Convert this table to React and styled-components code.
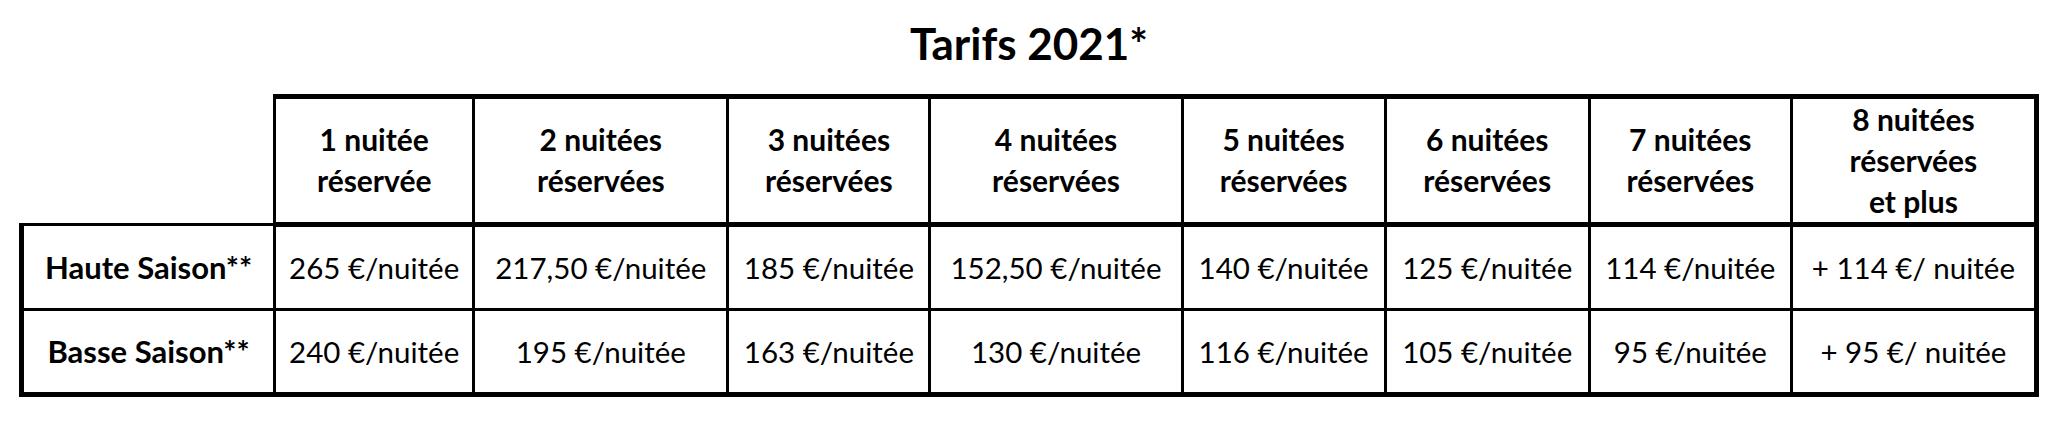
import React from "react";
import styled, { createGlobalStyle } from "styled-components";

const columns = [253, 199, 254, 202, 252, 203, 204, 202, 245];

const headers = [
  ["1 nuitée", "réservée"],
  ["2 nuitées", "réservées"],
  ["3 nuitées", "réservées"],
  ["4 nuitées", "réservées"],
  ["5 nuitées", "réservées"],
  ["6 nuitées", "réservées"],
  ["7 nuitées", "réservées"],
  ["8 nuitées", "réservées", "et plus"],
];

const seasons = [
  {
    label: "Haute Saison**",
    prices: [
      "265 €/nuitée",
      "217,50 €/nuitée",
      "185 €/nuitée",
      "152,50 €/nuitée",
      "140 €/nuitée",
      "125 €/nuitée",
      "114 €/nuitée",
      "+ 114 €/ nuitée",
    ],
  },
  {
    label: "Basse Saison**",
    prices: [
      "240 €/nuitée",
      "195 €/nuitée",
      "163 €/nuitée",
      "130 €/nuitée",
      "116 €/nuitée",
      "105 €/nuitée",
      "95 €/nuitée",
      "+ 95 €/ nuitée",
    ],
  },
];

const GlobalStyle = createGlobalStyle`
  body {
    margin: 0;
    background: #fff;
    color: #000;
    font-family: Lato, "Open Sans", sans-serif;
  }
`;

const Page = styled.main`
  padding: 17px 0 0 19px;
  width: 2020px;
`;

const Title = styled.h1`
  margin: 0 0 24px;
  text-align: center;
  font-size: 44px;
  font-weight: 700;
  line-height: 1.2;
`;

const Table = styled.table`
  border-collapse: collapse;
  table-layout: fixed;
  width: 2020px;
`;

const Col = styled.col`
  width: ${(p) => p.$w}px;
`;

const Corner = styled.th`
  border: none;
  padding: 0;
`;

const HeadCell = styled.th`
  border-top: 5px solid #000;
  border-left: 3px solid #000;
  border-right: 3px solid #000;
  border-bottom: 5px solid #000;
  padding: 0;
  vertical-align: middle;
  font-size: 30px;
  font-weight: 700;
  line-height: 41px;
  text-align: center;

  &:last-child {
    border-right-width: 5px;
  }
`;

const Row = styled.tr`
  height: 85px;
`;

const Label = styled.th`
  border-left: 5px solid #000;
  border-right: 3px solid #000;
  border-top: 3px solid #000;
  border-bottom: 3px solid #000;
  padding: 0;
  font-size: 31px;
  font-weight: 700;
  text-align: center;
  vertical-align: middle;

  tr:last-child > & {
    border-bottom-width: 5px;
  }
`;

const Price = styled.td`
  border: 3px solid #000;
  padding: 0;
  font-size: 29.5px;
  font-weight: 400;
  text-align: center;
  vertical-align: middle;
  white-space: nowrap;

  &:last-child {
    border-right-width: 5px;
  }

  tr:last-child > & {
    border-bottom-width: 5px;
  }
`;

const App = () => {
  return (
    <Page>
      <GlobalStyle />
      <Title>Tarifs 2021*</Title>
      <Table>
        <colgroup>
          {columns.map((w, i) => (
            <Col key={i} $w={w} />
          ))}
        </colgroup>
        <thead>
          <tr>
            <Corner />
            {headers.map((lines) => (
              <HeadCell key={lines[0]}>
                {lines.map((l, i) => (
                  <React.Fragment key={l}>
                    {i > 0 && <br />}
                    {l}
                  </React.Fragment>
                ))}
              </HeadCell>
            ))}
          </tr>
        </thead>
        <tbody>
          {seasons.map((s) => (
            <Row key={s.label}>
              <Label>{s.label}</Label>
              {s.prices.map((p, j) => (
                <Price key={j}>{p}</Price>
              ))}
            </Row>
          ))}
        </tbody>
      </Table>
    </Page>
  );
};

export default App;
